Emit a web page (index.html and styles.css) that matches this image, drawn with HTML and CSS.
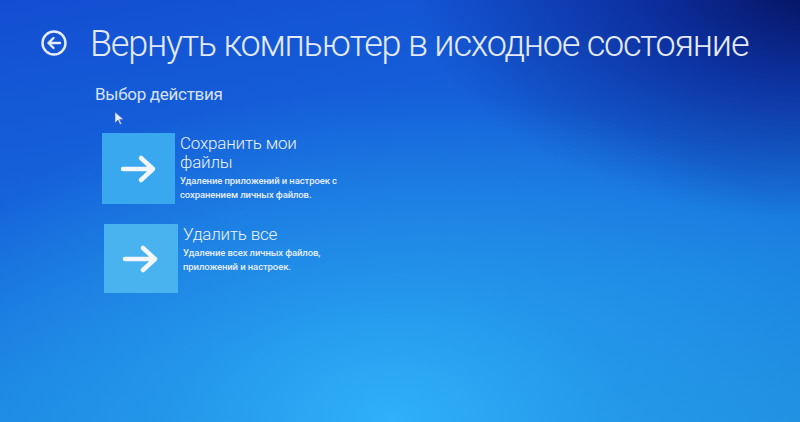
FILE: index.html
```html
<!DOCTYPE html>
<html lang="ru">
<head>
<meta charset="utf-8">
<title>Вернуть компьютер в исходное состояние</title>
<link rel="stylesheet" href="styles.css">
</head>
<body>
<div class="screen">
  <header class="header">
    <svg class="back" width="28" height="28" viewBox="0 0 28 28">
      <circle cx="14" cy="14" r="11.5" fill="none" stroke="#e6ecfa" stroke-width="2.4"/>
      <path d="M20 14H8.5M13.5 9l-5 5 5 5" fill="none" stroke="#e6ecfa" stroke-width="2.4" stroke-linecap="round" stroke-linejoin="round"/>
    </svg>
    <h1 class="title">Вернуть компьютер в исходное состояние</h1>
  </header>
  <div class="subtitle">Выбор действия</div>
  <div class="options">
    <div class="option">
      <div class="tile">
        <svg width="40" height="30" viewBox="0 0 40 30">
          <path d="M4 15H34M22 4l12 11-12 11" fill="none" stroke="#f3f6fb" stroke-width="4.5" stroke-linecap="round" stroke-linejoin="round"/>
        </svg>
      </div>
      <div class="text">
        <div class="opt-title">Сохранить мои<br>файлы</div>
        <div class="opt-desc">Удаление приложений и настроек с<br>сохранением личных файлов.</div>
      </div>
    </div>
    <div class="option second">
      <div class="tile">
        <svg width="40" height="30" viewBox="0 0 40 30">
          <path d="M4 15H34M22 4l12 11-12 11" fill="none" stroke="#f3f6fb" stroke-width="4.5" stroke-linecap="round" stroke-linejoin="round"/>
        </svg>
      </div>
      <div class="text">
        <div class="opt-title">Удалить все</div>
        <div class="opt-desc">Удаление всех личных файлов,<br>приложений и настроек.</div>
      </div>
    </div>
  </div>
  <svg class="cursor" width="10" height="14" viewBox="0 0 10 14">
    <path d="M1 1v11l3-3 2 4.5 1.6-.7-2-4.3H9.5z" fill="#e8f0ff" stroke="#3a5fc0" stroke-width="0.6"/>
  </svg>
</div>
</body>
</html>
```
FILE: styles.css
```css
html, body {
  margin: 0;
  padding: 0;
  width: 800px;
  height: 422px;
  overflow: hidden;
}
.screen {
  position: relative;
  width: 800px;
  height: 422px;
  box-sizing: border-box;
  padding: 19px 0 0 40px;
  font-family: Roboto, "Noto Sans", sans-serif;
  color: #e8eefa;
  background:
    radial-gradient(ellipse 520px 330px at 390px 420px, rgba(48,178,250,0.95) 0%, rgba(40,160,240,0.6) 45%, rgba(30,130,230,0) 100%),
    radial-gradient(ellipse 420px 240px at 830px -20px, rgba(4,10,80,0.95) 0%, rgba(8,24,130,0.65) 45%, rgba(10,40,170,0) 100%),
    linear-gradient(170deg, #134ed2 0%, #1562da 35%, #1a82e0 70%, #1f8ede 100%);
}
.header {
  display: flex;
  align-items: center;
  gap: 22px;
}
.back {
  flex: none;
  margin-top: -2px;
}
.title {
  margin: 0;
  white-space: nowrap;
  font-weight: 300;
  font-size: 36px;
  line-height: 50px;
  letter-spacing: -1.22px;
  color: #e4eaf8;
}
.subtitle {
  margin: 15px 0 0 55px;
  font-size: 17px;
  font-weight: 400;
  letter-spacing: -0.3px;
  color: #d8e2f6;
}
.options {
  margin: 29px 0 0 62px;
  display: flex;
  flex-direction: column;
  gap: 20px;
}
.option {
  display: flex;
  gap: 5px;
}
.second {
  margin-left: 2px;
}
.tile {
  flex: none;
  width: 73px;
  height: 71px;
  background: #3aa8ee;
  display: flex;
  align-items: center;
  justify-content: center;
}
.second .tile {
  width: 74px;
  height: 69px;
  background: #48b3ee;
}
.text {
  padding-top: 1px;
}
.opt-title {
  font-size: 17px;
  line-height: 19px;
  font-weight: 300;
  letter-spacing: -0.2px;
  color: #eef3fc;
}
.opt-desc {
  margin-top: 2px;
  font-size: 9.5px;
  line-height: 13.5px;
  font-weight: 500;
  letter-spacing: -0.1px;
  color: #e6eefa;
}
.cursor {
  position: absolute;
  left: 114px;
  top: 111px;
}
```
